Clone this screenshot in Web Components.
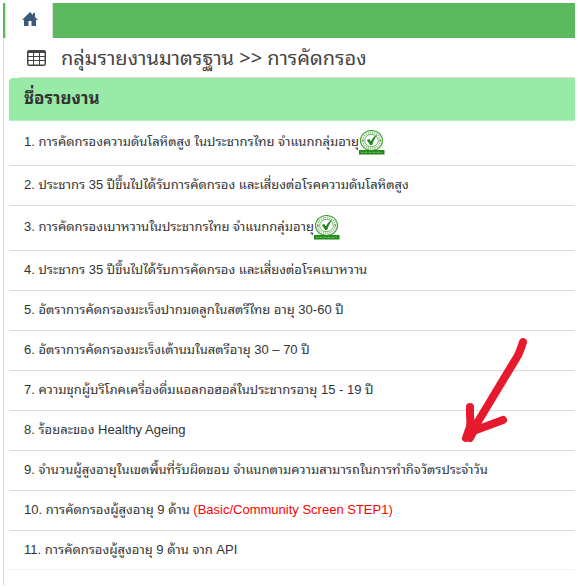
<!DOCTYPE html>
<html lang="th">
<head>
<meta charset="utf-8">
<meta name="viewport" content="width=device-width, initial-scale=1">
<title>กลุ่มรายงานมาตรฐาน</title>
<style>
  body {
    margin: 0;
    background: #fff;
    color: #333;
    font-family: "Liberation Sans", "Noto Sans Thai Looped", "Loma", sans-serif;
    font-size: 13px;
    line-height: 20px;
  }
</style>
</head>
<body>
<report-page>
  <nav-bar slot="nav"></nav-bar>
  <page-title>กลุ่มรายงานมาตรฐาน &gt;&gt; การคัดกรอง</page-title>
  <report-list heading="ชื่อรายงาน"></report-list>
  <pointer-arrow slot="overlay"></pointer-arrow>
</report-page>

<script>
class ReportPage extends HTMLElement {
  connectedCallback() {
    this.attachShadow({ mode: 'open' });
    this.shadowRoot.innerHTML = `
      <style>
        :host {
          display: block;
          position: relative;
          padding: 3px;
        }

        main {
          border-left: 1px solid #c5e3c8;
          padding-bottom: 15px;
        }
      </style>
      <slot name="nav"></slot>
      <main><slot></slot></main>
      <slot name="overlay"></slot>
    `;
  }
}

class NavBar extends HTMLElement {
  connectedCallback() {
    this.attachShadow({ mode: 'open' });
    this.shadowRoot.innerHTML = `
      <style>
        :host {
          display: block;
          background: #5cb85c;
        }

        nav {
          display: flex;
          padding-left: 2px;
        }

        .tab {
          display: flex;
          align-items: center;
          justify-content: center;
          width: 46px;
          height: 35px;
          background: #fff;
          border: solid #ddd;
          border-width: 0 1px;
        }

        svg {
          width: 16px;
          height: 14px;
          margin: 0 0 4px 2px;
          fill: #3b5a7a;
        }
      </style>
      <nav>
        <a class="tab" href="#" aria-label="หน้าแรก">
          <svg viewBox="0 0 16 14" aria-hidden="true">
            <path d="M8 0 11 3V1h2v4l3 3H14v6H9.500V9h-3v5H2V8H0z"/>
          </svg>
        </a>
      </nav>
    `;
  }
}

class PageTitle extends HTMLElement {
  connectedCallback() {
    this.attachShadow({ mode: 'open' });
    this.shadowRoot.innerHTML = `
      <style>
        :host {
          display: block;
          margin-left: 15px;
          border-bottom: 1px solid #ddd;
        }

        h1 {
          display: flex;
          align-items: center;
          gap: 15px;
          margin: 0;
          padding: 5px 8px 4px;
          font: 400 20px/30px "Noto Sans", "Noto Sans Thai Looped", "Loma", sans-serif;
          color: #444;
        }

        svg {
          flex: none;
          width: 19px;
          height: 16px;
        }
      </style>
      <h1>
        <svg viewBox="0 0 19 16" aria-hidden="true">
          <path fill="#444" fill-rule="evenodd" d="M2 0h15a2 2 0 0 1 2 2v12a2 2 0 0 1-2 2H2a2 2 0 0 1-2-2V2a2 2 0 0 1 2-2zM1.500 3v3H6V3zM7 3v3h5V3zM13 3v3h4.500V3zM1.500 7v3H6V7zM7 7v3h5V7zM13 7v3h4.500V7zM1.500 11v3.500H6V11zM7 11v3.500h5V11zM13 11v3.500h4.500V11z"/>
        </svg>
        <span><slot></slot></span>
      </h1>
    `;
  }
}

// Round stamp with a tick, shown after certified reports
class StandardBadge extends HTMLElement {
  connectedCallback() {
    this.attachShadow({ mode: 'open' });
    this.shadowRoot.innerHTML = `
      <style>
        :host {
          display: inline-block;
          vertical-align: middle;
        }

        svg {
          display: block;
          width: 26px;
          height: 25px;
        }
      </style>
      <svg viewBox="0 0 26 25" aria-hidden="true">
        <ellipse cx="12.500" cy="10.500" rx="11" ry="10" fill="#fff" stroke="#3d9d31" stroke-width="1.100"/>
        <ellipse cx="12.500" cy="10.500" rx="8.800" ry="7.900" fill="none" stroke="#7cbb73" stroke-width="1.500" stroke-dasharray="1.200 1"/>
        <ellipse cx="12.500" cy="10.500" rx="6.800" ry="6.200" fill="#fff" stroke="#68b35f" stroke-width="1"/>
        <circle cx="3.800" cy="10.500" r="1" fill="#a89b58"/>
        <circle cx="21.200" cy="10.500" r="1" fill="#a89b58"/>
        <path d="M7.800 10 10.200 9l1.700 2.600C13.500 8.200 15.500 6 18.500 4.500c-2.500 3-4 6.500-5.300 10.500h-2z" fill="#21831b"/>
        <path d="M0 20h25.500v4.500H0z" fill="#1f8b14"/>
        <path d="M2 22.300h21" stroke="#79bc70" stroke-width="1" stroke-dasharray="2 .6 1 .4"/>
      </svg>
    `;
  }
}

class ReportList extends HTMLElement {
  connectedCallback() {
    const reports = [
      { name: 'การคัดกรองความดันโลหิตสูง ในประชากรไทย จำแนกกลุ่มอายุ', badge: true },
      { name: 'ประชากร 35 ปีขึ้นไปได้รับการคัดกรอง และเสี่ยงต่อโรคความดันโลหิตสูง' },
      { name: 'การคัดกรองเบาหวานในประชากรไทย จำแนกกลุ่มอายุ', badge: true },
      { name: 'ประชากร 35 ปีขึ้นไปได้รับการคัดกรอง และเสี่ยงต่อโรคเบาหวาน' },
      { name: 'อัตราการคัดกรองมะเร็งปากมดลูกในสตรีไทย อายุ 30-60 ปี' },
      { name: 'อัตราการคัดกรองมะเร็งเต้านมในสตรีอายุ 30 – 70 ปี' },
      { name: 'ความชุกผู้บริโภคเครื่องดื่มแอลกอฮอล์ในประชากรอายุ 15 - 19 ปี' },
      { name: 'ร้อยละของ Healthy Ageing' },
      { name: 'จำนวนผู้สูงอายุในเขตพื้นที่รับผิดชอบ จำแนกตามความสามารถในการทำกิจวัตรประจำวัน' },
      { name: 'การคัดกรองผู้สูงอายุ 9 ด้าน', note: '(Basic/Community Screen STEP1)' },
      { name: 'การคัดกรองผู้สูงอายุ 9 ด้าน จาก API' }
    ];

    const rows = reports.map((r, i) => `
      <tr><td><a href="#">${i + 1}. ${r.name}${r.note ? ` <span class="note">${r.note}</span>` : ''}</a>${r.badge ? '<standard-badge></standard-badge>' : ''}</td></tr>`).join('');

    this.attachShadow({ mode: 'open' });
    this.shadowRoot.innerHTML = `
      <style>
        :host {
          display: block;
          margin-left: 1px;
          border-bottom: 1px solid #f2f2f2;
          border-radius: 0 0 0 4px;
        }

        .wrap {
          margin-left: 4px;
        }

        table {
          width: 100%;
          border-spacing: 0;
        }

        th {
          padding: 11px 15px;
          border-bottom: 1px solid #b4efbf;
          border-top-left-radius: 4px;
          background: #98eaa6;
          font-size: 17px;
          font-weight: 700;
          text-align: left;
        }

        td {
          padding: 9px 15px 10px;
          border-bottom: 1px solid #ddd;
        }

        tr:last-child td {
          padding-bottom: 9px;
          border-bottom: 0;
        }

        a {
          color: inherit;
          text-decoration: none;
        }

        .note {
          color: #f00;
        }
      </style>
      <div class="wrap">
        <table>
          <thead><tr><th scope="col">${this.getAttribute('heading')}</th></tr></thead>
          <tbody>${rows}</tbody>
        </table>
      </div>
    `;
  }
}

// Hand-drawn arrow lying over the list
class PointerArrow extends HTMLElement {
  connectedCallback() {
    this.attachShadow({ mode: 'open' });
    this.shadowRoot.innerHTML = `
      <style>
        :host {
          position: absolute;
          top: 336px;
          left: 460px;
          pointer-events: none;
        }

        svg {
          display: block;
          width: 70px;
          height: 110px;
        }
      </style>
      <svg viewBox="0 0 70 110" fill="none" stroke="#e6192d" stroke-width="8" stroke-linecap="round" stroke-linejoin="round" aria-hidden="true">
        <path d="M63 6C61 12 60 16 57 21L19 84 10 102"/>
        <path d="M10 71V80L11 88 6 102"/>
        <path d="M43 84 16 94"/>
        <path d="M10 80 13 90 16 94 10 102 6 102 9 92z" fill="#e6192d" stroke-width="6"/>
      </svg>
    `;
  }
}

customElements.define('report-page', ReportPage);
customElements.define('nav-bar', NavBar);
customElements.define('page-title', PageTitle);
customElements.define('standard-badge', StandardBadge);
customElements.define('report-list', ReportList);
customElements.define('pointer-arrow', PointerArrow);
</script>
</body>
</html>
